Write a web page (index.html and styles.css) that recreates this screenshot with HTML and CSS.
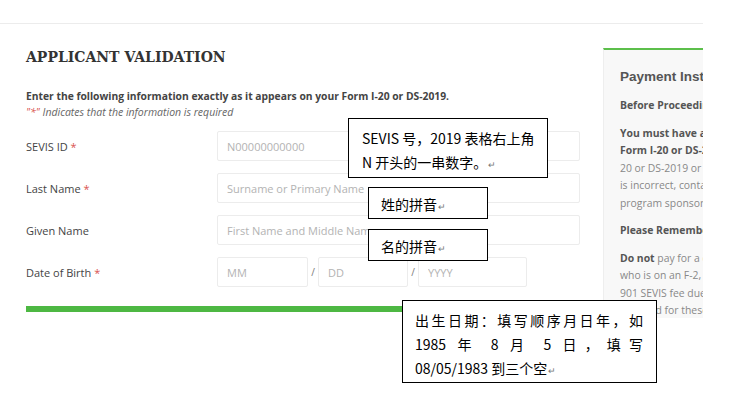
FILE: index.html
```html
<!DOCTYPE html>
<html lang="en">
<head>
    <meta charset="UTF-8">
    <title>Applicant Validation</title>
    <link rel="stylesheet" href="styles.css">
</head>
<body>
    <div class="topbar"></div>
    <div class="page">
        <div class="main">
            <h1>APPLICANT VALIDATION</h1>
            <p class="intro">Enter the following information exactly as it appears on your Form I-20 or DS-2019.</p>
            <p class="note"><span class="req">"*"</span> Indicates that the information is required</p>

            <div class="row">
                <label>SEVIS ID <span class="req">*</span></label>
                <input type="text" class="field" placeholder="N00000000000">
            </div>
            <div class="row">
                <label>Last Name <span class="req">*</span></label>
                <input type="text" class="field" placeholder="Surname or Primary Name">
            </div>
            <div class="row">
                <label>Given Name</label>
                <input type="text" class="field" placeholder="First Name and Middle Name">
            </div>
            <div class="row">
                <label>Date of Birth <span class="req">*</span></label>
                <div class="dob">
                    <input type="text" class="field mm" placeholder="MM">
                    <span class="slash">/</span>
                    <input type="text" class="field dd" placeholder="DD">
                    <span class="slash">/</span>
                    <input type="text" class="field yyyy" placeholder="YYYY">
                </div>
            </div>
            <div class="progress"></div>
        </div>

        <div class="sidebar">
            <h2>Payment Instructions</h2>
            <p class="line"><b>Before Proceeding</b></p>
            <p class="para">
                <span class="line"><b>You must have a valid</b></span>
                <span class="line"><b>Form I-20 or DS-2019.</b> If your I-</span>
                <span class="line">20 or DS-2019 or information</span>
                <span class="line">is incorrect, contact your school or</span>
                <span class="line">program sponsor.</span>
            </p>
            <p class="line"><b>Please Remember</b></p>
            <p class="para">
                <span class="line"><b>Do not</b> pay for a dependent</span>
                <span class="line">who is on an F-2, M-2 or J-2 visa.</span>
                <span class="line">901 SEVIS fee due is not required</span>
                <span class="line">required for these dependents.</span>
            </p>
        </div>
    </div>

    <!-- word text boxes pasted on top of the screenshot -->
    <div class="note-box box-sevis" lang="zh-CN">
        <span class="ln just">SEVIS 号，2019 表格右上角</span>
        <span class="ln">N 开头的一串数字。<span class="ret">↵</span></span>
    </div>
    <div class="note-box box-last" lang="zh-CN">
        <span class="ln">姓的拼音<span class="ret">↵</span></span>
    </div>
    <div class="note-box box-given" lang="zh-CN">
        <span class="ln">名的拼音<span class="ret">↵</span></span>
    </div>
    <div class="note-box box-dob" lang="zh-CN">
        <span class="ln just">出生日期：填写顺序月日年，如</span>
        <span class="ln just">1985 年 8 月 5 日，填写</span>
        <span class="ln">08/05/1983 到三个空<span class="ret">↵</span></span>
    </div>
</body>
</html>
```

FILE: styles.css
```css
body {
    margin: 0;
    min-height: 413px;
    font-family: "Open Sans", "Liberation Sans", sans-serif;
    color: #444;
    background: #fff;
    position: relative;
}

.topbar {
    width: 703px;
    height: 23px;
    border-bottom: 1px solid #ececec;
}

.page {
    width: 703px;
    display: flex;
    align-items: flex-start;
    overflow: hidden;
}

.main {
    flex-shrink: 0;
    width: 577px;
    padding-left: 26px;
}

h1 {
    margin: 24px 0 0;
    font-family: "DejaVu Serif", "Liberation Serif", serif;
    font-size: 14px;
    line-height: 19px;
    font-weight: bold;
    color: #333;
}

.intro {
    margin: 21px 0 0;
    font-size: 10.3px;
    line-height: 16px;
    font-weight: bold;
    color: #444;
}

.note {
    margin: 0;
    font-size: 10.5px;
    line-height: 16px;
    font-style: italic;
    color: #666;
}

.req {
    color: #d9534f;
}

.row {
    display: flex;
    align-items: center;
    margin-top: 12px;
}

.note + .row {
    margin-top: 11px;
}

.row label {
    width: 191px;
    font-size: 11px;
    color: #444;
}

.field {
    box-sizing: border-box;
    width: 363px;
    height: 30px;
    padding: 0 9px;
    border: 1px solid #ececec;
    border-radius: 2px;
    font-family: "Open Sans", sans-serif;
    font-size: 11px;
    color: #444;
    background: #fff;
}

.field::placeholder {
    color: #b3b3b3;
}

.dob {
    display: flex;
    align-items: center;
}

.dob .mm {
    width: 91px;
}

.dob .dd {
    width: 90px;
}

.dob .yyyy {
    width: 109px;
}

.slash {
    width: 10px;
    text-align: center;
    font-size: 10px;
    color: #777;
}

.progress {
    width: 554px;
    height: 6px;
    margin-top: 19px;
    background: #4db843;
}

.sidebar {
    flex-shrink: 0;
    box-sizing: border-box;
    width: 240px;
    height: 270px;
    margin-top: 24px;
    padding: 18px 0 0 16px;
    border-top: 2px solid #5cbf4b;
    border-left: 1px solid #eeeeee;
    background: #f8f8f8;
    white-space: nowrap;
    font-size: 10.4px;
    line-height: 17.5px;
    color: #888;
}

.sidebar h2 {
    margin: 0 0 12px;
    font-family: "Liberation Sans", Arial, sans-serif;
    font-size: 13.5px;
    line-height: 17px;
    color: #555;
}

.sidebar b {
    color: #555;
}

.sidebar p {
    margin: 0 0 10px;
}

.sidebar .line {
    display: block;
}

.note-box {
    position: absolute;
    box-sizing: border-box;
    border: 1px solid #000;
    background: #fff;
    font-family: "Noto Sans CJK SC", sans-serif;
    font-size: 14px;
    line-height: 24px;
    color: #000;
}

.note-box .ln {
    display: block;
    white-space: nowrap;
}

.note-box .just {
    text-align: justify;
    text-align-last: justify;
}

.ret {
    font-size: 9px;
    color: #777;
    margin-left: 1px;
}

.box-sevis {
    left: 348px;
    top: 118px;
    width: 200px;
    height: 60px;
    padding: 7px 13px 0;
}

.box-last {
    left: 368px;
    top: 187px;
    width: 120px;
    height: 32px;
    padding: 4px 12px 0;
}

.box-given {
    left: 368px;
    top: 229px;
    width: 120px;
    height: 32px;
    padding: 4px 12px 0;
}

.box-dob {
    left: 402px;
    top: 300px;
    width: 255px;
    height: 83px;
    padding: 7px 13px 0 12px;
}
```
